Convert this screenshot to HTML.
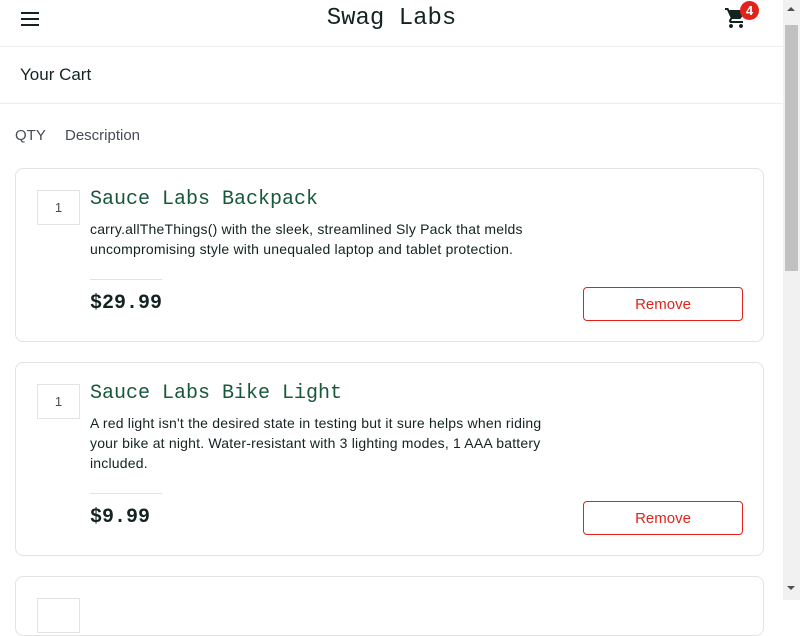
<!DOCTYPE html>
<html><head><style>
*{box-sizing:border-box;margin:0;padding:0}
body{width:800px;height:600px;overflow:hidden;font-family:"Liberation Sans",sans-serif;background:#fff;position:relative}
.a{position:absolute}
.hdr{left:0;top:0;width:783px;height:47px;border-bottom:1px solid #ededed}
.title{left:0;width:783px;top:5px;text-align:center;font-family:"Liberation Mono",monospace;font-size:24px;color:#132322}
.sub{left:0;top:47px;width:783px;height:57px;border-bottom:1px solid #ededed}
.card{left:15px;width:749px;border:1px solid #e3e3e3;border-radius:8px}
.qty{width:43px;height:35px;border:1px solid #e3e3e3;text-align:center;line-height:33px;font-size:13px;color:#484c55}
.name{font-family:"Liberation Mono",monospace;font-size:20px;color:#18583a}
.desc{font-size:14px;line-height:20px;color:#132322;letter-spacing:0.2px}
.div{width:72px;height:1px;background:#e3e3e3}
.price{font-family:"Liberation Mono",monospace;font-size:20px;font-weight:bold;color:#132322}
.btn{width:160px;height:34px;border:1px solid #e2231a;border-radius:4px;color:#e2231a;font-size:15px;text-align:center;line-height:33px}
</style></head><body>
<div class="a hdr"></div>
<div class="a" style="left:21px;top:12px;width:18px;height:2px;background:#132322;box-shadow:0 6px 0 #132322,0 12px 0 #132322"></div>
<div class="a title">Swag Labs</div>
<svg class="a" style="left:723px;top:6px" width="26" height="24" viewBox="0 0 24 24"><path fill="#132322" d="M7 18c-1.1 0-2 .9-2 2s.9 2 2 2 2-.9 2-2-.9-2-2-2zM1 2v2h2l3.6 7.6-1.4 2.4c-.1.3-.2.6-.2 1 0 1.1.9 2 2 2h12v-2H7.4c-.1 0-.2-.1-.2-.2v-.1l.9-1.7h7.4c.8 0 1.4-.4 1.7-1l3.6-6.5c.1-.2.2-.3.2-.5 0-.6-.5-1-1-1H5.2l-.9-2H1zm16 16c-1.1 0-2 .9-2 2s.9 2 2 2 2-.9 2-2-.9-2-2-2z"/></svg>
<div class="a" style="left:740px;top:1px;width:19px;height:19px;border-radius:50%;background:#e2231a;color:#fff;font-size:13px;font-weight:bold;text-align:center;line-height:19px">4</div>
<div class="a sub"></div>
<div class="a" style="left:20px;top:65px;font-size:17px;color:#132322">Your Cart</div>
<div class="a" style="left:15px;top:127px;font-size:15px;color:#484c55">QTY</div>
<div class="a" style="left:65px;top:127px;font-size:15px;color:#484c55">Description</div>

<div class="a card" style="top:168px;height:174px"></div>
<div class="a qty" style="left:37px;top:190px">1</div>
<div class="a name" style="left:90px;top:188px">Sauce Labs Backpack</div>
<div class="a desc" style="left:90px;top:219px;width:470px">carry.allTheThings() with the sleek, streamlined Sly Pack that melds uncompromising style with unequaled laptop and tablet protection.</div>
<div class="a div" style="left:90px;top:279px"></div>
<div class="a price" style="left:90px;top:292px">$29.99</div>
<div class="a btn" style="left:583px;top:287px">Remove</div>

<div class="a card" style="top:362px;height:194px"></div>
<div class="a qty" style="left:37px;top:384px">1</div>
<div class="a name" style="left:90px;top:382px">Sauce Labs Bike Light</div>
<div class="a desc" style="left:90px;top:413px;width:470px">A red light isn't the desired state in testing but it sure helps when riding<br>your bike at night. Water-resistant with 3 lighting modes, 1 AAA battery<br>included.</div>
<div class="a div" style="left:90px;top:493px"></div>
<div class="a price" style="left:90px;top:506px">$9.99</div>
<div class="a btn" style="left:583px;top:501px">Remove</div>

<div class="a card" style="top:576px;height:60px"></div>
<div class="a qty" style="left:37px;top:598px"></div>

<div class="a" style="left:783px;top:0;width:17px;height:600px;background:#f1f1f1"></div>
<div class="a" style="left:785px;top:25px;width:13px;height:246px;background:#c1c1c1"></div>
<div class="a" style="left:787px;top:7px;width:0;height:0;border-left:4px solid transparent;border-right:4px solid transparent;border-bottom:4px solid #505050"></div>
<div class="a" style="left:787px;top:586px;width:0;height:0;border-left:4px solid transparent;border-right:4px solid transparent;border-top:4px solid #505050"></div>
</body></html>
